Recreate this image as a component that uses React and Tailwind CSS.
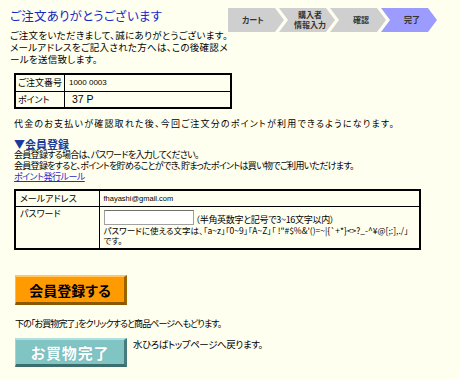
import React from 'react'

const steps = [
  { label: ['カート'], active: false, first: true },
  { label: ['購入者', '情報入力'], active: false },
  { label: ['確認'], active: false },
  { label: ['完了'], active: true },
]

const PW_RULE = 'パスワードに使える文字は、「a~z」「0~9」「A~Z」「 !"#$%&\'()=~|{`+*}<>?_-^¥@[;:],./」です。'

const StepBar = () => (
  <div className="flex h-[24px] mt-[1px]">
    {steps.map((s, i) => (
      <div
        key={i}
        className={`flex w-[56px] shrink-0 flex-col items-center justify-center text-[8px] font-bold leading-[10px] text-[#333] ${
          s.active ? 'bg-[#9c9cff]' : 'bg-[#cfcfcf]'
        } ${
          s.first
            ? '[clip-path:polygon(0_0,calc(100%-9px)_0,100%_50%,calc(100%-9px)_100%,0_100%)] pr-[6px]'
            : '-ml-[5px] pl-[6px] [clip-path:polygon(0_0,calc(100%-9px)_0,100%_50%,calc(100%-9px)_100%,0_100%,9px_50%)]'
        }`}
      >
        {s.label.map(l => (
          <span key={l}>{l}</span>
        ))}
      </div>
    ))}
  </div>
)

export default function App() {
  return (
    <div className="min-h-screen w-[460px] bg-[#ffffef] text-black font-['Noto_Sans_CJK_JP','Liberation_Sans',sans-serif] [font-feature-settings:'palt']">
      {/* Header */}
      <div className="flex pl-[10px] pt-[7px]">
        <div className="w-[220px] shrink-0">
          <h1 className="text-[12.5px] leading-[18px] text-[#1428c8] tracking-[0.2px]">
            ご注文ありがとうございます
          </h1>
          <p className="mt-[4px] text-[9.5px] leading-[12px] tracking-[0.3px]">
            ご注文をいただきまして、誠にありがとうございます。
            メールアドレスをご記入された方へは、この後確認メールを送信致します。
          </p>
        </div>
        <div className="ml-[-2px]">
          <StepBar />
        </div>
      </div>

      {/* Main */}
      <div className="pl-[14px]">
        <table className="mt-[8px] w-[218px] border-collapse border-2 border-black text-[9px] leading-[11px]">
          <tbody>
            <tr className="h-[17px]">
              <td className="w-[49px] whitespace-nowrap border border-black px-[2px] py-0">ご注文番号</td>
              <td className="border border-black px-[4px] py-0 font-['Liberation_Sans'] text-[8px]">1000 0003</td>
            </tr>
            <tr className="h-[17px]">
              <td className="whitespace-nowrap border border-black px-[2px] py-0">ポイント</td>
              <td className="border border-black px-[7px] py-0 font-['Liberation_Sans'] text-[10.5px]">37 P</td>
            </tr>
          </tbody>
        </table>

        <p className="mt-[9px] text-[9px] leading-[12px] tracking-[1.2px]">
          代金のお支払いが確認取れた後、今回ご注文分のポイントが利用できるようになります。
        </p>

        <div className="mt-[9px]">
          <div className="text-[11px] font-bold leading-[10px] text-[#1a3a9c]">▼会員登録</div>
          <p className="text-[9px] leading-[11px] tracking-[-0.7px]">会員登録する場合は、パスワードを入力してください。</p>
          <p className="text-[9px] leading-[11px] tracking-[-0.7px]">
            会員登録をすると、ポイントを貯めることができ、貯まったポイントは買い物でご利用いただけます。
          </p>
          <a href="#" className="block w-fit text-[9px] leading-[11px] tracking-[-0.5px] text-[#2a2acc] underline">
            ポイント発行ルール
          </a>
        </div>

        <table className="mt-[7px] w-[407px] border-collapse border-2 border-black text-[9px] leading-[11px]">
          <tbody>
            <tr className="h-[16px]">
              <td className="w-[84px] whitespace-nowrap border border-black px-[4px] py-0">メールアドレス</td>
              <td className="border border-black px-[4px] py-0 font-['Liberation_Sans'] text-[7.5px]">fhayashi@gmail.com</td>
            </tr>
            <tr className="h-[43px]">
              <td className="border border-black px-[4px] align-top pt-[1px]">パスワード</td>
              <td className="border border-black px-[4px] align-top pt-[3px]">
                <div className="flex items-end">
                  <input
                    type="password"
                    className="h-[15px] w-[90px] border border-[#a0a0a0] border-t-[#707070] bg-white"
                  />
                  <span className="ml-[2px] text-[9px] leading-[11px] tracking-[-0.3px]">（半角英数字と記号で3~16文字以内）</span>
                </div>
                <p className="text-[8.5px] leading-[10px]">{PW_RULE}</p>
              </td>
            </tr>
          </tbody>
        </table>

        <button
          type="button"
          className="mt-[25px] ml-[1px] flex h-[30px] w-[112px] items-center justify-center border-t-2 border-l border-b-[3px] border-r-[3px] border-t-[#ffc766] border-l-[#ffbb44] border-b-[#8a5800] border-r-[#9a6400] bg-[#ff9a00] text-[14px] font-bold leading-none text-black"
        >
          会員登録する
        </button>

        <p className="mt-[13px] ml-[1px] text-[9px] leading-[12px] tracking-[-0.9px]">
          下の「お買物完了」をクリックすると商品ページへもどります。
        </p>

        <div className="mt-[8px] ml-[1px] flex items-start gap-[6px]">
          <button
            type="button"
            className="flex h-[29px] w-[112px] items-center justify-center border-t-2 border-l border-b-[3px] border-r-[3px] border-t-[#b0e0e0] border-l-[#a0d6d6] border-b-[#3c6e6e] border-r-[#467c7c] bg-[#80c4c4] text-[15px] font-bold leading-none text-white tracking-[0.8px] [text-shadow:0_0_1px_#6aa]"
          >
            お買物完了
          </button>
          <p className="text-[9.5px] leading-[12px] tracking-[-0.4px]">水ひろばトップページへ戻ります。</p>
        </div>
      </div>
    </div>
  )
}
